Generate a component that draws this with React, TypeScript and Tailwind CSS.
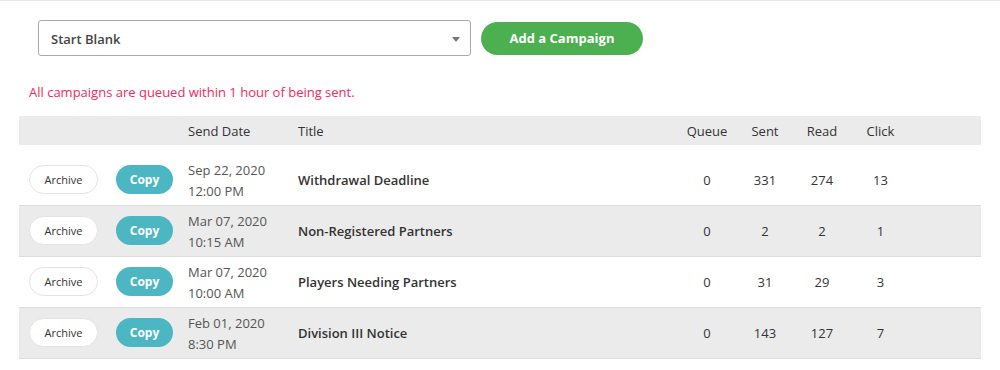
import React from 'react';

interface Campaign {
  date: string;
  time: string;
  title: string;
  queue: number;
  sent: number;
  read: number;
  click: number;
}

const campaigns: Campaign[] = [
  { date: 'Sep 22, 2020', time: '12:00 PM', title: 'Withdrawal Deadline', queue: 0, sent: 331, read: 274, click: 13 },
  { date: 'Mar 07, 2020', time: '10:15 AM', title: 'Non-Registered Partners', queue: 0, sent: 2, read: 2, click: 1 },
  { date: 'Mar 07, 2020', time: '10:00 AM', title: 'Players Needing Partners', queue: 0, sent: 31, read: 29, click: 3 },
  { date: 'Feb 01, 2020', time: '8:30 PM', title: 'Division III Notice', queue: 0, sent: 143, read: 127, click: 7 },
];

const cols = 'grid grid-cols-[89px_80px_110px_379px_60px_56px_58px_59px_1fr] items-center';

const App: React.FC = () => {
  return (
    <div className="w-[1000px] h-[370px] bg-white border-t border-[#e8e8e8] font-['Open_Sans',sans-serif] text-[#333]">
      <div className="flex items-center gap-[10px] pl-[38px] pt-[19px]">
        <div className="relative flex items-center w-[433px] h-[36px] border border-[#a9a9a9] rounded-[3px] px-3 pt-[4px]">
          <span className="text-[13px] font-semibold text-[#444]">Start Blank</span>
          <span className="absolute right-[10px] top-[16px] w-0 h-0 border-l-[4px] border-r-[4px] border-t-[5px] border-l-transparent border-r-transparent border-t-[#777]" />
        </div>
        <button className="w-[162px] h-[33px] rounded-full bg-[#4caf50] text-white text-[13px] font-bold pt-[2px]">
          Add a Campaign
        </button>
      </div>

      <p className="pl-[29px] mt-[27px] text-[13px] text-[#f2295b]">
        All campaigns are queued within 1 hour of being sent.
      </p>

      <div className="mx-[19px] mt-[13px]">
        <div className={`${cols} h-[29px] bg-[#ebebeb] text-[13px] pt-[3px]`}>
          <div />
          <div />
          <div>Send Date</div>
          <div>Title</div>
          <div className="text-center">Queue</div>
          <div className="text-center">Sent</div>
          <div className="text-center">Read</div>
          <div className="text-center">Click</div>
          <div />
        </div>
        <div className="h-[10px]" />
        {campaigns.map((c, i) => (
          <div
            key={i}
            className={`${cols} h-[51px] border-b border-[#dcdcdc] ${i % 2 === 1 ? 'bg-[#ebebeb]' : 'bg-white'}`}
          >
            <div className="pl-[10px]">
              <button className="w-[69px] h-[29px] rounded-full bg-white border border-[#e3e3e3] text-[11px] text-[#333] pt-[1px]">
                Archive
              </button>
            </div>
            <div className="pl-[8px]">
              <button className="w-[57px] h-[29px] rounded-full bg-[#4cb6c3] text-white text-[12px] font-bold pt-[1px]">
                Copy
              </button>
            </div>
            <div className="text-[13px] leading-[21px] text-[#555] pt-[3px]">
              <div>{c.date}</div>
              <div>{c.time}</div>
            </div>
            <div className="text-[13px] font-semibold text-[#333] pt-[3px]">{c.title}</div>
            <div className="text-center text-[13px] pt-[3px]">{c.queue}</div>
            <div className="text-center text-[13px] pt-[3px]">{c.sent}</div>
            <div className="text-center text-[13px] pt-[3px]">{c.read}</div>
            <div className="text-center text-[13px] pt-[3px]">{c.click}</div>
            <div />
          </div>
        ))}
      </div>
    </div>
  );
};

export default App;
